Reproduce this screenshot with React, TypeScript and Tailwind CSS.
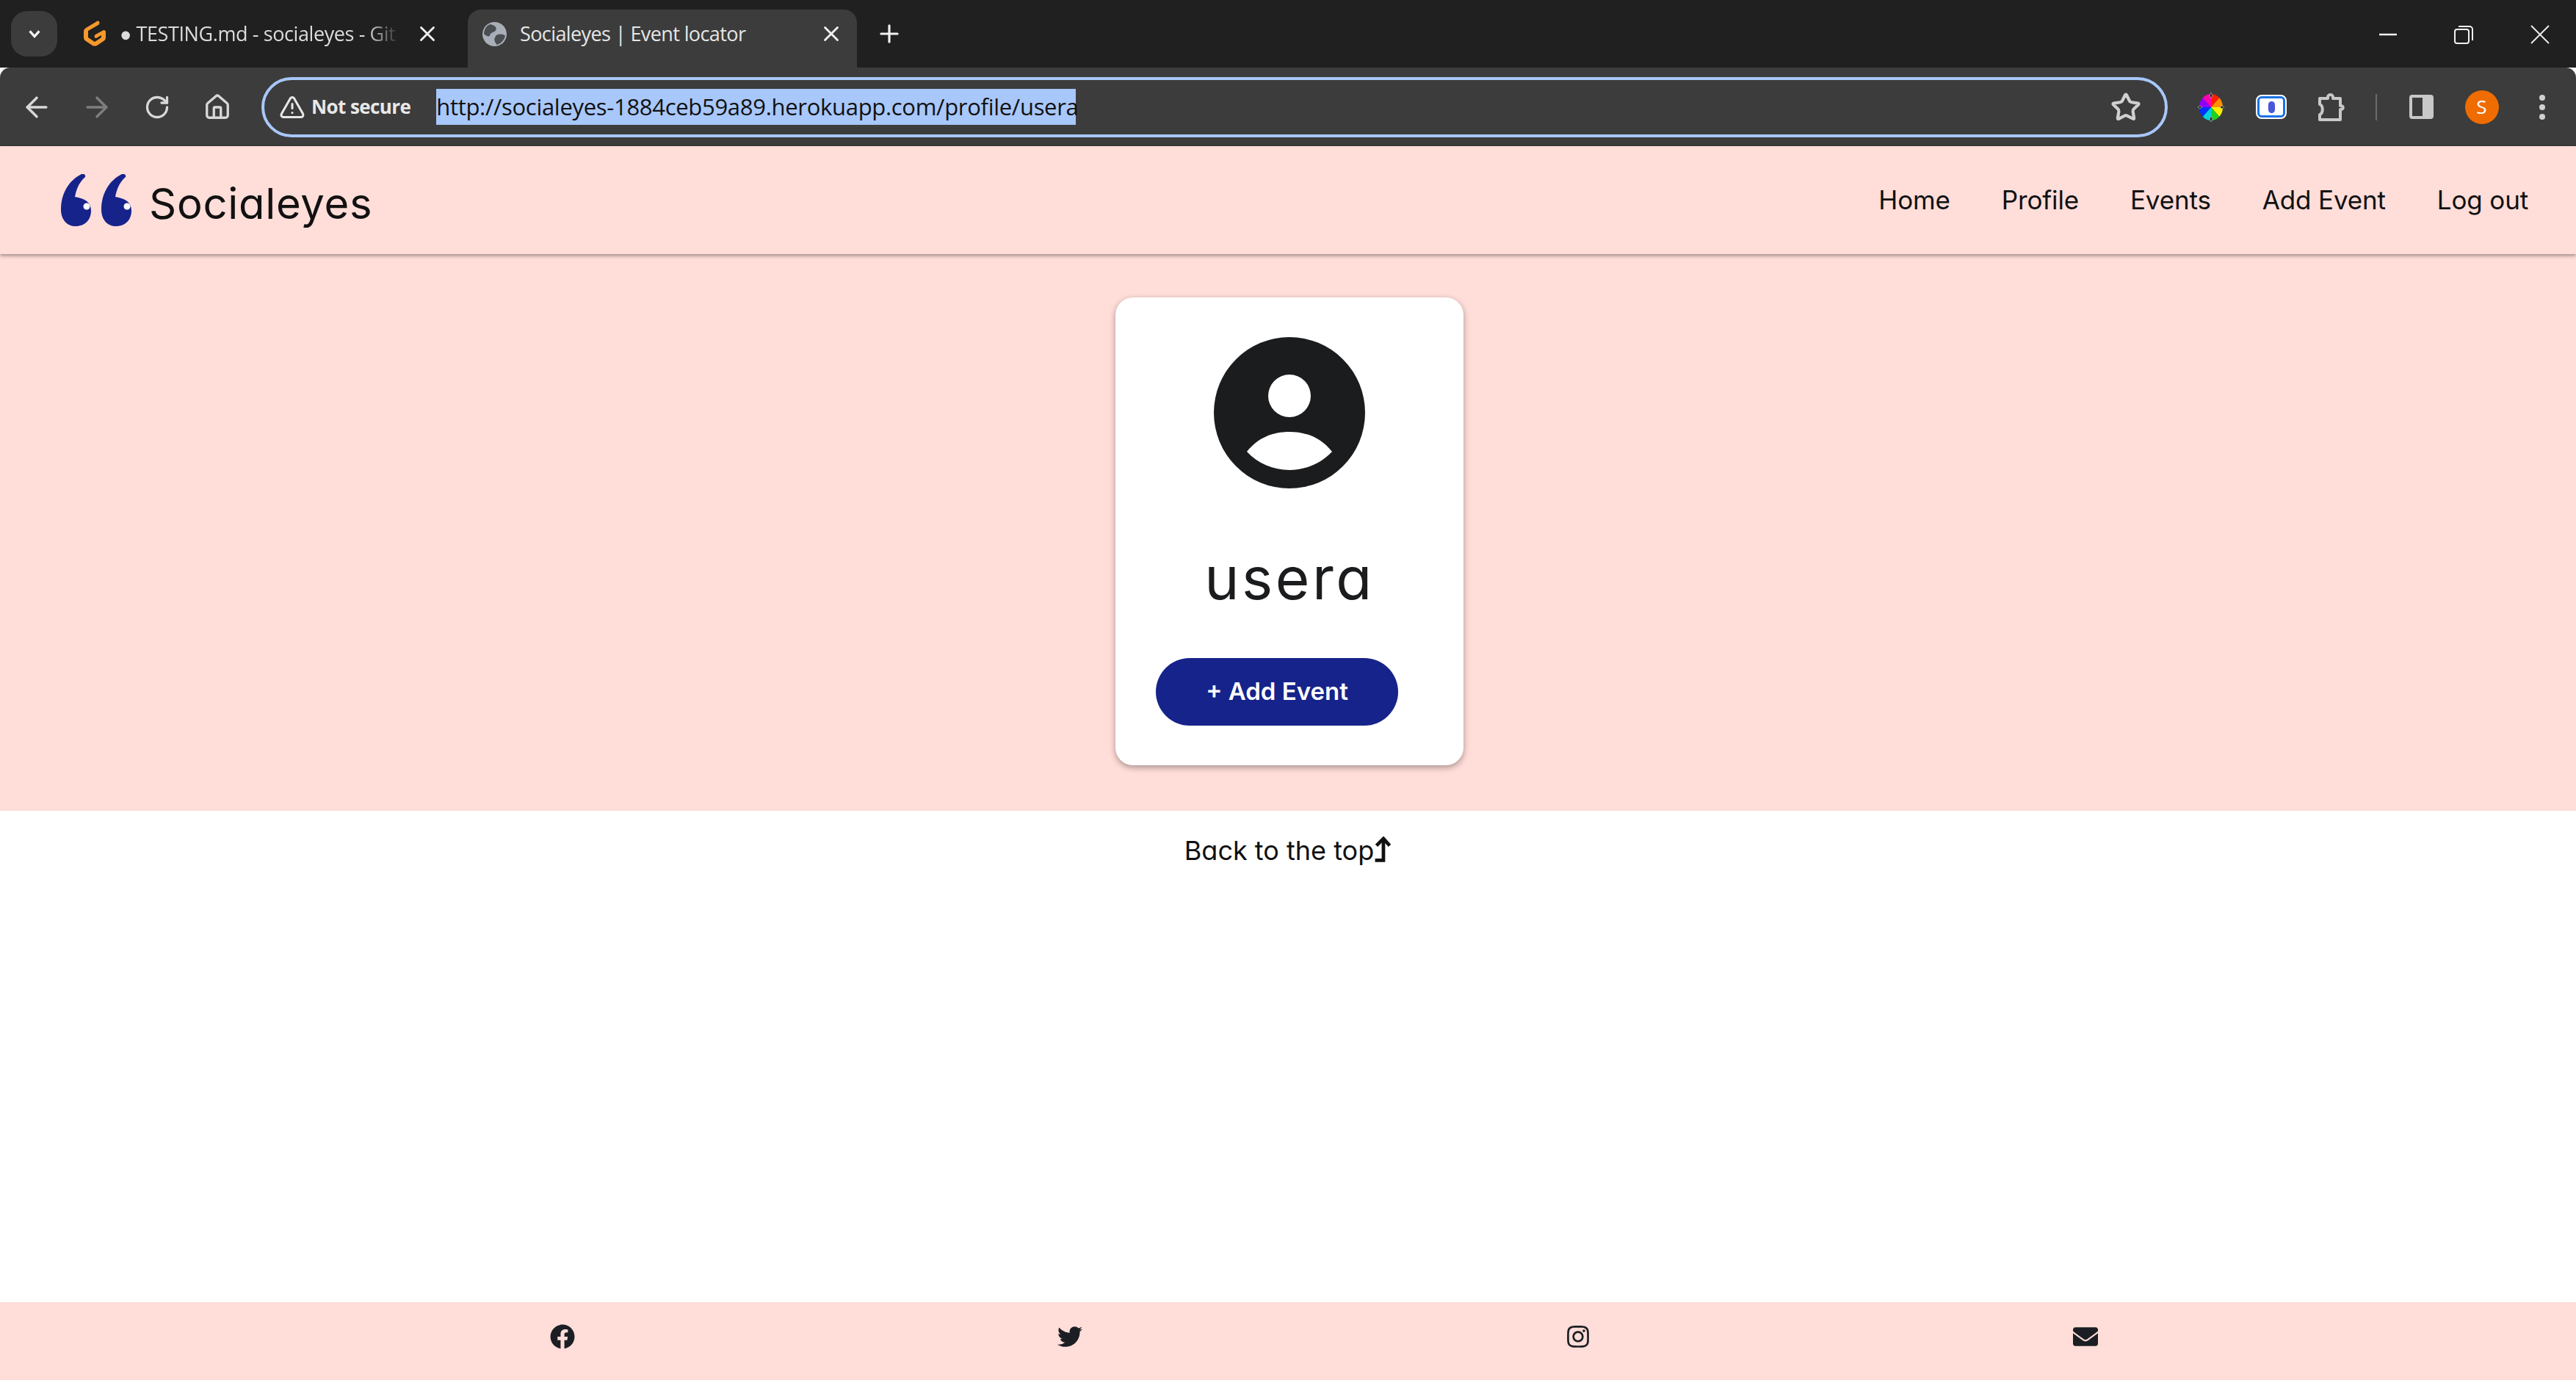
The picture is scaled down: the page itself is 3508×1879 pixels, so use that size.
import { ArrowLeft, ArrowRight, Home, Plus, RotateCw, Star, TriangleAlert, X } from "lucide-react";
import { FaEnvelope, FaFacebook, FaInstagram, FaTwitter } from "react-icons/fa";

const chromeFont = "font-['Open_Sans',sans-serif]";
const pageFont = "font-['Inter',sans-serif] [font-feature-settings:'cv11']";

function GitpodIcon() {
  return (
    <svg viewBox="0 0 33 38" className="h-[38px] w-[33px] shrink-0">
      <path
        d="M20 2 5 11c-2 1-3 3-3 5v8c0 2 1 4 3 5l9 6c2 1 4 1 6 0l9-6c2-1 3-3 3-5v-7c0-2-1-3-3-3l-11 6c-2 1-2 5 1 5l7-4v3l-9 6-9-6v-9l14-8c3-2 1-7-2-5Z"
        fill="#f6982c"
      />
    </svg>
  );
}

function GlobeIcon() {
  return (
    <svg viewBox="0 0 32 32" className="h-[33px] w-[33px] shrink-0">
      <circle cx="16" cy="16" r="16" fill="#a9afb8" />
      <path d="M10 3c5 1 9 3 8 7s-7 3-8 7-5 1-8-1c0-6 3-11 8-13ZM19 17c4-2 9-1 11 1-1 6-6 11-11 12-2-3-4-6-3-8s1-4 3-5Z" fill="#4a4d52" />
    </svg>
  );
}

function WheelIcon() {
  const colors = ["#ff2000", "#ff9000", "#f8f000", "#20d020", "#00d0e0", "#0030ff", "#9000ff", "#ff00b0"];
  return (
    <svg viewBox="0 0 36 40" className="h-[40px] w-[36px]">
      {colors.map((c, i) => {
        const a = (i * Math.PI) / 4 - Math.PI / 2;
        const b = a + Math.PI / 4;
        return (
          <path
            key={c}
            d={`M18 20 L${18 + 16 * Math.cos(a)} ${20 + 18 * Math.sin(a)} A16 18 0 0 1 ${18 + 16 * Math.cos(b)} ${20 + 18 * Math.sin(b)} Z`}
            fill={c}
          />
        );
      })}
      <path d="M18 0 16 4 18 8 20 4ZM18 32 16 36 18 40 20 36ZM0 20 3 18 6 20 3 22ZM30 20 33 18 36 20 33 22Z" fill="#222" stroke="#bbb" strokeWidth="0.7" />
    </svg>
  );
}

function QuoteLogo() {
  return (
    <svg viewBox="0 0 96 71" className="h-[71px] w-[96px] shrink-0">
      {[0, 55].map((x) => (
        <g key={x} transform={`translate(${x} 0)`}>
          <path
            d="M28 0C12 8 0 25 0 48c0 15 9 23 20 23 13 0 21-9 21-21 0-12-9-17-22-19 2-11 6-20 14-27 1-3-2-5-5-4Z"
            fill="#16238a"
          />
          <circle cx="35" cy="44" r="4.5" fill="#ffffff" />
        </g>
      ))}
    </svg>
  );
}

function AvatarIcon() {
  return (
    <svg viewBox="0 0 206 206" className="h-[206px] w-[206px]">
      <path
        fillRule="evenodd"
        d="M103 0a103 103 0 1 1 0 206a103 103 0 1 1 0-206ZM103 51a29 29 0 1 0 0 58a29 29 0 1 0 0-58ZM45 156C60 137 80 129 103 129C126 129 146 137 161 156C146 172 125 181 103 181C81 181 60 172 45 156Z"
        fill="#1b1c1e"
      />
    </svg>
  );
}

const navLinks = ["Home", "Profile", "Events", "Add Event", "Log out"];

export default function App() {
  return (
    <div className="flex h-[1879px] w-[3508px] flex-col overflow-hidden bg-white">
      {/* tab strip */}
      <div className="flex h-[92px] shrink-0 items-end bg-[#202020] pl-[15px]">
        <div className="mb-[15px] flex h-[62px] w-[63px] items-center justify-center rounded-[22px] bg-[#3c3c3c]">
          <svg viewBox="0 0 24 24" className="h-[22px] w-[22px]" fill="none" stroke="#f2f2f2" strokeWidth="3.5">
            <path d="m5 8 7 8 7-8" />
          </svg>
        </div>
        <div className="ml-[12px] flex items-end">
          <div className="flex h-[79px] w-[547px] items-center pb-[13px] pl-[22px] pr-[18px]">
            <GitpodIcon />
            <span className={`ml-[18px] w-[382px] overflow-hidden whitespace-nowrap ${chromeFont} text-[27px] leading-[36px] tracking-[-0.4px] text-[#dcdcdc] [mask-image:linear-gradient(to_right,black_88%,transparent)]`}>
              ● TESTING.md - socialeyes - Git
            </span>
            <X className="ml-[20px] h-[34px] w-[34px] text-[#f0f0f0]" strokeWidth={2} />
          </div>
          <div className="flex h-[79px] w-[530px] items-center rounded-t-[18px] bg-[#3c3c3c] pb-[13px] pl-[20px] pr-[18px]">
            <GlobeIcon />
            <span className={`ml-[18px] min-w-0 flex-1 whitespace-nowrap ${chromeFont} text-[27px] leading-[36px] tracking-[-0.6px] text-[#e6e6e6]`}>
              Socialeyes | Event locator
            </span>
            <X className="h-[34px] w-[34px] text-[#f0f0f0]" strokeWidth={2} />
          </div>
        </div>
        <Plus className="mb-[27px] ml-[25px] h-[38px] w-[38px] text-[#f0f0f0]" strokeWidth={2} />
        <div className="mb-[32px] ml-auto flex items-center gap-[78px] pr-[36px]">
          <svg viewBox="0 0 24 24" className="h-[24px] w-[24px]" fill="none" stroke="#f0f0f0" strokeWidth="2.5">
            <path d="M0 12h24" />
          </svg>
          <svg viewBox="0 0 26 26" className="h-[26px] w-[26px]" fill="none" stroke="#f0f0f0" strokeWidth="2">
            <rect x="1" y="6" width="19" height="19" rx="3" />
            <path d="M6 2h15a4 4 0 0 1 4 4v15" />
          </svg>
          <svg viewBox="0 0 26 26" className="h-[26px] w-[26px]" fill="none" stroke="#f0f0f0" strokeWidth="1.8">
            <path d="M1 1l24 24M25 1 1 25" />
          </svg>
        </div>
      </div>

      {/* toolbar */}
      <div className="flex h-[107px] shrink-0 items-center rounded-t-[14px] bg-[#3c3c3c] pl-[9px] pr-[5px]">
        <div className="flex w-[347px] items-center">
          <div className="flex w-[82px] justify-center"><ArrowLeft className="h-[44px] w-[44px] text-[#d8d8d8]" strokeWidth={1.9} /></div>
          <div className="flex w-[82px] justify-center"><ArrowRight className="h-[44px] w-[44px] text-[#7e7e7e]" strokeWidth={1.9} /></div>
          <div className="flex w-[82px] justify-center"><RotateCw className="h-[36px] w-[36px] text-[#d8d8d8]" strokeWidth={2.2} /></div>
          <div className="flex w-[82px] justify-center"><Home className="h-[38px] w-[38px] text-[#d8d8d8]" strokeWidth={2.1} /></div>
        </div>
        <div className="flex h-[82px] w-[2596px] items-center rounded-full border-[4px] border-[#a8c7fa] bg-[#3c3c3c] pl-[20px] pr-[32px]">
          <TriangleAlert className="h-[36px] w-[36px] text-[#e8e8e8]" strokeWidth={2} />
          <span className={`ml-[8px] whitespace-nowrap ${chromeFont} text-[26px] font-bold tracking-[-0.6px] text-[#e8e8e8]`}>Not secure</span>
          <span className={`ml-[35px] flex h-[49px] w-[871px] items-center whitespace-nowrap bg-[#a8c7fa] ${chromeFont} text-[31px] tracking-[-0.3px] text-[#111111]`}>
            http://socialeyes-1884ceb59a89.herokuapp.com/profile/usera
          </span>
          <Star className="ml-auto h-[42px] w-[42px] text-[#d0d0d0]" strokeWidth={2.4} />
        </div>
        <div className="ml-[18px] flex items-center">
          <div className="flex w-[82px] justify-center"><WheelIcon /></div>
          <div className="flex w-[82px] justify-center">
            <div className="flex h-[29px] w-[38px] items-center justify-center rounded-[6px] border-[3px] border-[#1a73e8] bg-white outline-[2px] outline-white">
              <div className="h-[16px] w-[9px] rounded-full bg-[#4a56d8]" />
            </div>
          </div>
          <div className="flex w-[82px] justify-center">
            <svg viewBox="0 0 38 38" className="h-[38px] w-[38px]" fill="none" stroke="#c8c8c8" strokeWidth="4">
              <path d="M3 7h11V5c0-4 7-4 7 0v2h10v10c5-1 5 6 0 5v14H3v-7c5-2 5-12 0-14Z" strokeLinejoin="round" />
            </svg>
          </div>
          <div className="flex w-[40px] justify-center"><div className="h-[36px] w-[2px] bg-[#6a6a6a]" /></div>
          <div className="flex w-[82px] justify-center">
            <div className="flex h-[33px] w-[33px] overflow-hidden rounded-[4px] border-[4px] border-[#c8c8c8]">
              <div className="flex-1" />
              <div className="w-[11px] bg-[#c8c8c8]" />
            </div>
          </div>
          <div className="flex w-[83px] justify-center">
            <div className={`flex h-[46px] w-[46px] items-center justify-center rounded-full bg-[#ee6c00] ${chromeFont} text-[26px] text-white`}>
              S
            </div>
          </div>
          <div className="flex w-[82px] justify-center">
            <svg viewBox="0 0 8 34" className="h-[34px] w-[8px]" fill="#d0d0d0">
              <circle cx="4" cy="4" r="4" />
              <circle cx="4" cy="17" r="4" />
              <circle cx="4" cy="30" r="4" />
            </svg>
          </div>
        </div>
      </div>

      {/* site nav */}
      <nav className={`z-10 flex h-[147px] shrink-0 items-center justify-between bg-[#ffddd9] pl-[83px] pr-[65px] shadow-[0_2px_5px_rgba(0,0,0,0.4)] ${pageFont}`}>
        <div className="flex items-center">
          <QuoteLogo />
          <span className="ml-[24px] mt-[8px] text-[58px] leading-none tracking-[0.7px] text-[#111111]">Socialeyes</span>
        </div>
        <ul className="flex items-center gap-[70px] text-[35px] leading-none tracking-[-0.15px] text-[#111111]">
          {navLinks.map((link) => (
            <li key={link}>{link}</li>
          ))}
        </ul>
      </nav>

      {/* profile card */}
      <main className={`flex h-[758px] shrink-0 justify-center bg-[#ffddd9] pl-[4px] pt-[59px] ${pageFont}`}>
        <div className="flex h-[637px] w-[474px] flex-col items-center rounded-[24px] bg-white pt-[54px] shadow-[0_3px_8px_rgba(0,0,0,0.35)]">
          <AvatarIcon />
          <h1 className="mt-[82px] text-[80px] leading-none tracking-[3.5px] text-[#1b1c1e]">usera</h1>
          <button className="ml-[55px] mt-[69px] h-[92px] w-[330px] self-start rounded-full bg-[#16238a] text-[33px] font-semibold text-white">
            + Add Event
          </button>
        </div>
      </main>

      <div className={`flex flex-1 justify-center pt-[32px] ${pageFont}`}>
        <a className="flex h-[44px] items-center text-[36px] leading-none text-[#111111]">
          Back to the top
          <svg viewBox="0 0 24 40" className="h-[38px] w-[24px]" fill="none" stroke="#111111" strokeWidth="5">
            <path d="M3 13 13 3l9 10" />
            <path d="M13 4v30H1" />
          </svg>
        </a>
      </div>

      <footer className="flex h-[106px] shrink-0 items-center justify-between bg-[#ffddd9] pb-[12px] pl-[749px] pr-[651px] text-[#1b1f23]">
        <FaFacebook className="h-[34px] w-[34px]" />
        <FaTwitter className="h-[34px] w-[34px]" />
        <FaInstagram className="h-[34px] w-[34px]" />
        <FaEnvelope className="h-[34px] w-[34px]" />
      </footer>
    </div>
  );
}
